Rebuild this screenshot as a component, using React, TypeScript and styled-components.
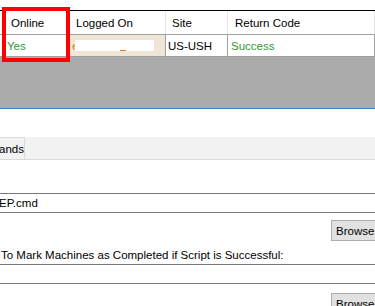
import styled, { createGlobalStyle } from 'styled-components';

const GlobalStyle = createGlobalStyle`
  html, body {
    margin: 0;
    padding: 0;
    background: #ffffff;
    overflow: hidden;
  }
  body {
    font-family: "Liberation Sans", Arial, sans-serif;
    font-size: 11.5px;
    color: #000000;
  }
`;

const Page = styled.div`
  width: 375px;
  height: 306px;
  display: flex;
  flex-direction: column;
  overflow: hidden;
  position: relative;
  & > * {
    flex-shrink: 0;
  }
`;

const GridArea = styled.div`
  height: 108px;
  display: flex;
  flex-direction: column;
  background: #ababab;
  position: relative;
`;

const TopGap = styled.div`
  height: 10px;
  background: #ffffff;
`;

const Grid = styled.div`
  border-top: 1px solid #000000;
  background: #ffffff;
`;

const Row = styled.div<{ $header?: boolean }>`
  display: grid;
  grid-template-columns: 70px 96px 62px 1fr;
  height: ${({ $header }) => ($header ? 23 : 21)}px;
  border-bottom: 1px solid #a0a0a0;
`;

const HeadCell = styled.div<{ $pad: number }>`
  display: flex;
  align-items: center;
  padding-left: ${({ $pad }) => $pad}px;
  border-right: 1px solid #e5e5e5;
  white-space: nowrap;
  overflow: hidden;
`;

const Cell = styled.div<{ $pad: number; $color?: string; $bg?: string }>`
  display: flex;
  align-items: center;
  padding-left: ${({ $pad }) => $pad}px;
  border-right: 1px solid #a0a0a0;
  color: ${({ $color }) => $color || '#000000'};
  background: ${({ $bg }) => $bg || '#ffffff'};
  white-space: nowrap;
  overflow: hidden;
  position: relative;
`;

const Redaction = styled.span`
  position: absolute;
  left: 5px;
  top: 5px;
  width: 79px;
  height: 11px;
  background: #ffffff;
`;

const Underscore = styled.span`
  position: absolute;
  left: 50px;
  top: 15px;
  width: 6px;
  height: 1px;
  background: #e07b24;
`;

const Highlight = styled.div`
  position: absolute;
  left: 2px;
  top: 7px;
  width: 68px;
  height: 55px;
  box-sizing: border-box;
  border: 4px solid #ff0000;
  pointer-events: none;
`;

const Lower = styled.div`
  flex: 1 0 auto;
  border-top: 1px solid #3c7fbf;
  display: flex;
  flex-direction: column;
  padding-top: 28px;
  & > * {
    flex-shrink: 0;
  }
`;

const TabStrip = styled.div`
  height: 22px;
  background: #f2f2f2;
  border-bottom: 1px solid #d9d9d9;
  display: flex;
`;

const Tab = styled.div`
  width: 25px;
  border-top: 1px solid #d9d9d9;
  border-right: 1px solid #d9d9d9;
  display: flex;
  align-items: center;
  justify-content: flex-end;
  box-sizing: border-box;
  overflow: hidden;
  white-space: nowrap;
`;

const Panel = styled.div`
  display: flex;
  flex-direction: column;
  padding-top: 33px;
  & > * {
    flex-shrink: 0;
  }
`;

const TextBox = styled.div`
  height: 18px;
  border-top: 1px solid #7a7a7a;
  border-bottom: 1px solid #7a7a7a;
  display: flex;
  align-items: center;
  white-space: nowrap;
  overflow: hidden;
  text-indent: -1px;
`;

const ButtonRow = styled.div<{ $top: number }>`
  display: flex;
  justify-content: flex-end;
  margin-top: ${({ $top }) => $top}px;
  margin-right: -36px;
`;

const Browse = styled.div`
  width: 74px;
  height: 19px;
  border: 1px solid #adadad;
  background: #e1e1e1;
  display: flex;
  align-items: center;
  padding-left: 4px;
  box-sizing: content-box;
`;

const Label = styled.div`
  margin-top: 6px;
  height: 17px;
  line-height: 17px;
  padding-left: 1px;
  white-space: nowrap;
`;

const SecondBox = styled(TextBox)`
  margin-top: 0px;
`;

export default function App() {
  return (
    <Page>
      <GlobalStyle />
      <GridArea>
        <TopGap />
        <Grid>
          <Row $header>
            <HeadCell $pad={11}>Online</HeadCell>
            <HeadCell $pad={6}>Logged On</HeadCell>
            <HeadCell $pad={6}>Site</HeadCell>
            <HeadCell $pad={7}>Return Code</HeadCell>
          </Row>
          <Row>
            <Cell $pad={7} $color="#2e9a35">Yes</Cell>
            <Cell $pad={2} $color="#e07b24" $bg="#efe6d7">
              e
              <Redaction />
              <Underscore />
            </Cell>
            <Cell $pad={2}>US-USH</Cell>
            <Cell $pad={3} $color="#2e9a35">Success</Cell>
          </Row>
        </Grid>
        <Highlight />
      </GridArea>
      <Lower>
        <TabStrip>
          <Tab>ands</Tab>
        </TabStrip>
        <Panel>
          <TextBox>EP.cmd</TextBox>
          <ButtonRow $top={7}>
            <Browse>Browse</Browse>
          </ButtonRow>
          <Label>To Mark Machines as Completed if Script is Successful:</Label>
          <SecondBox />
          <ButtonRow $top={9}>
            <Browse>Browse</Browse>
          </ButtonRow>
        </Panel>
      </Lower>
    </Page>
  );
}
